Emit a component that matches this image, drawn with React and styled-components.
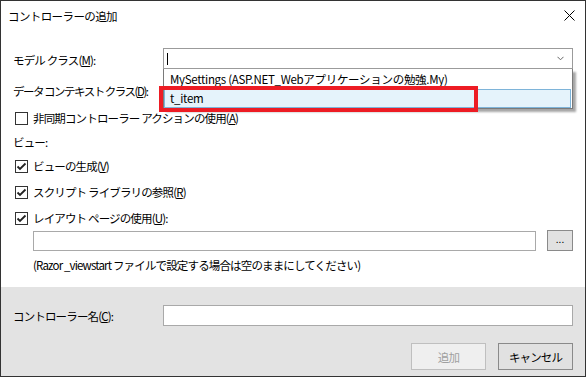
import React from "react";
import styled, { createGlobalStyle } from "styled-components";

const GlobalStyle = createGlobalStyle`
  html, body {
    margin: 0;
    padding: 0;
    background: #ffffff;
  }
  body {
    font-family: "Noto Sans CJK JP", "Noto Sans", sans-serif;
    font-size: 11.5px;
    letter-spacing: -0.85px;
    color: #000;
  }
`;

const Window = styled.div`
  width: 586px;
  height: 377px;
  box-sizing: border-box;
  border: 1px solid #333;
  display: flex;
  flex-direction: column;
  background: #fff;
  position: relative;
`;

const TitleBar = styled.div`
  height: 29px;
  display: flex;
  align-items: center;
  justify-content: space-between;
  padding: 0 10px 0 7px;
  letter-spacing: -0.6px;
`;

const CloseIcon = styled.svg`
  width: 11px;
  height: 11px;
`;

const Body = styled.div`
  flex: 1;
  display: flex;
  flex-direction: column;
  padding: 18px 12px 0;
`;

const Row = styled.div`
  display: flex;
  align-items: center;
  height: ${(p) => p.$h || 20}px;
  margin-top: ${(p) => p.$mt || 0}px;
  padding-left: ${(p) => p.$indent || 0}px;
`;

const Label = styled.div`
  width: 150px;
  flex-shrink: 0;
  padding-top: ${(p) => p.$nudge || 0}px;
  white-space: nowrap;
  letter-spacing: ${(p) => (p.$tight ? "-1.5px" : "inherit")};
`;

const Text = styled.span`
  white-space: nowrap;
`;

const ComboWrap = styled.div`
  flex: 1;
  height: 100%;
  position: relative;
`;

const Combo = styled.div`
  height: 100%;
  box-sizing: border-box;
  border: 1px solid #9b9b9b;
  background: #fff;
  display: flex;
  align-items: center;
  justify-content: space-between;
  padding: 0 8px 0 3px;
`;

const Caret = styled.div`
  width: 1px;
  height: 12px;
  background: #000;
`;

const Chevron = styled.svg`
  width: 7px;
  height: 5px;
`;

const DropList = styled.div`
  position: absolute;
  left: 0;
  right: 0;
  top: 21px;
  height: 40px;
  box-sizing: border-box;
  border: 1px solid #7a7a7a;
  border-top: none;
  background: #fff;
  box-shadow: 3px 3px 2px rgba(0, 0, 0, 0.35);
  padding: 1px 1px 1px 0;
  z-index: 2;
`;

const Option = styled.div`
  position: relative;
  z-index: ${(p) => (p.$active ? 0 : 1)};
  height: 19px;
  box-sizing: border-box;
  padding: 1px 0 0 5px;
  white-space: nowrap;
  letter-spacing: -0.3px;
  line-height: 15px;
  background: ${(p) => (p.$active ? "#e5f3fb" : "transparent")};
  border: 1px solid ${(p) => (p.$active ? "#7eb4d9" : "transparent")};
`;

const Highlight = styled.div`
  position: absolute;
  left: -4px;
  top: 38px;
  width: 319px;
  height: 26px;
  box-sizing: border-box;
  border: 4px solid #ed1c24;
  z-index: 3;
`;

const Box = styled.div`
  width: 13px;
  height: 13px;
  box-sizing: border-box;
  border: 1px solid #333;
  background: #fff;
  margin: 0 5px 0 2px;
  flex-shrink: 0;
  display: flex;
  align-items: center;
  justify-content: center;
`;

const TextBox = styled.div`
  flex: 1;
  height: ${(p) => p.$h || 21}px;
  box-sizing: border-box;
  border: 1px solid #a9a9a9;
  background: #fff;
`;

const BrowseButton = styled.div`
  width: 26px;
  height: 21px;
  box-sizing: border-box;
  margin-left: 11px;
  border: 1px solid #8a8a8a;
  background: #e1e1e1;
  display: flex;
  align-items: center;
  justify-content: center;
  font-size: 10px;
  letter-spacing: 0;
  line-height: 1;
  padding-bottom: 3px;
`;

const Footer = styled.div`
  height: 89px;
  background: #e3e3e3;
  padding: 18px 12px 0;
  box-sizing: border-box;
  display: flex;
  flex-direction: column;
`;

const ButtonBar = styled.div`
  display: flex;
  justify-content: flex-end;
  gap: 12px;
  margin-top: 17px;
`;

const Button = styled.div`
  width: 75px;
  height: 27px;
  box-sizing: border-box;
  display: flex;
  align-items: center;
  justify-content: center;
  border: 1px solid ${(p) => (p.$disabled ? "#bfbfbf" : "#8a8a8a")};
  background: ${(p) => (p.$disabled ? "#efefef" : "#e1e1e1")};
  color: ${(p) => (p.$disabled ? "#a0a0a0" : "#000")};
`;

const Check = ({ checked }) => (
  <Box>
    {checked && (
      <svg width="11" height="11" viewBox="0 0 11 11">
        <polyline points="1.5,5.5 4,8 9.5,2.5" fill="none" stroke="#222" strokeWidth="1.8" />
      </svg>
    )}
  </Box>
);

export default function App() {
  return (
    <>
      <GlobalStyle />
      <Window>
        <TitleBar>
          <span>コントローラーの追加</span>
          <CloseIcon viewBox="0 0 11 11">
            <path d="M0.5 0.5 L10.5 10.5 M10.5 0.5 L0.5 10.5" stroke="#000" strokeWidth="1" />
          </CloseIcon>
        </TitleBar>
        <Body>
          <Row $h={21}>
            <Label $nudge={3}>
              モデル クラス(<u>M</u>):
            </Label>
            <ComboWrap>
              <Combo>
                <Caret />
                <Chevron viewBox="0 0 7 5">
                  <polyline points="0.5,0.8 3.5,3.8 6.5,0.8" fill="none" stroke="#666" strokeWidth="1" />
                </Chevron>
              </Combo>
              <DropList>
                <Option>MySettings (ASP.NET_Webアプリケーションの勉強.My)</Option>
                <Option $active>t_item</Option>
              </DropList>
              <Highlight />
            </ComboWrap>
          </Row>
          <Row $h={21} $mt={11}>
            <Label $tight>
              データ コンテキスト クラス(<u>D</u>):
            </Label>
            <ComboWrap>
              <Combo />
            </ComboWrap>
          </Row>
          <Row $mt={7}>
            <Check />
            <Text>
              非同期コントローラー アクションの使用(<u>A</u>)
            </Text>
          </Row>
          <Row $mt={4}>
            <Text>ビュー:</Text>
          </Row>
          <Row $mt={4}>
            <Check checked />
            <Text>
              ビューの生成(<u>V</u>)
            </Text>
          </Row>
          <Row $mt={6}>
            <Check checked />
            <Text>
              スクリプト ライブラリの参照(<u>R</u>)
            </Text>
          </Row>
          <Row $mt={6}>
            <Check checked />
            <Text>
              レイアウト ページの使用(<u>U</u>):
            </Text>
          </Row>
          <Row $h={21} $mt={2} $indent={20}>
            <TextBox $h={20} />
            <BrowseButton>...</BrowseButton>
          </Row>
          <Row $h={18} $mt={5} $indent={20}>
            <Text>(Razor _viewstart ファイルで設定する場合は空のままにしてください)</Text>
          </Row>
        </Body>
        <Footer>
          <Row $h={21}>
            <Label>
              コントローラー名(<u>C</u>):
            </Label>
            <TextBox />
          </Row>
          <ButtonBar>
            <Button $disabled>追加</Button>
            <Button>キャンセル</Button>
          </ButtonBar>
        </Footer>
      </Window>
    </>
  );
}
